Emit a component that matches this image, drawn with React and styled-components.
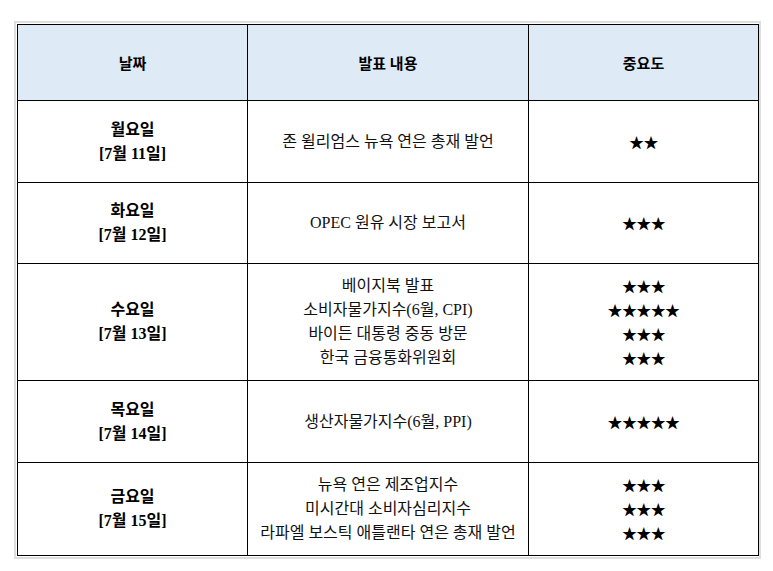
import React from "react";
import styled, { createGlobalStyle } from "styled-components";

const GlobalStyle = createGlobalStyle`
  html, body { margin: 0; padding: 0; background: #ffffff; }
  body { font-family: "Liberation Serif", "Noto Sans CJK KR", serif; }
`;

const Frame = styled.div`
  margin: 21px 0 0 14px;
  width: 747px;
  box-sizing: border-box;
  border: 2px solid #dedede;
  padding: 1px;
`;

const Table = styled.table`
  width: 741px;
  border-collapse: collapse;
  table-layout: fixed;
  border: 1px solid #000;
  font-family: "Liberation Serif", "Noto Sans CJK KR", serif;
  font-size: 16px;
  color: #111;
`;

const HeadCell = styled.th`
  background: #deeaf6;
  border: 1px solid #000;
  font-weight: 700;
  font-size: 15px;
  color: #000;
  text-align: center;
  vertical-align: middle;
  padding: 0;
`;

const Cell = styled.td`
  border: 1px solid #000;
  text-align: center;
  vertical-align: middle;
  padding: 0;
  line-height: 24px;
  font-weight: ${(p) => (p.$bold ? 700 : 400)};
  color: ${(p) => (p.$bold ? "#000" : "#111")};
`;

const Line = styled.div`
  white-space: nowrap;
`;

const Stars = styled.div`
  font-family: "Noto Sans CJK KR", sans-serif;
  font-size: 15px;
  line-height: 24px;
  color: #000;
  letter-spacing: -0.6px;
`;

const rows = [
  { day: "월요일", date: "[7월 11일]", h: 82, items: [["존 윌리엄스 뉴욕 연은 총재 발언", 2]] },
  { day: "화요일", date: "[7월 12일]", h: 81, items: [["OPEC 원유 시장 보고서", 3]] },
  {
    day: "수요일",
    date: "[7월 13일]",
    h: 117,
    items: [
      ["베이지북 발표", 3],
      ["소비자물가지수(6월, CPI)", 5],
      ["바이든 대통령 중동 방문", 3],
      ["한국 금융통화위원회", 3],
    ],
  },
  { day: "목요일", date: "[7월 14일]", h: 82, items: [["생산자물가지수(6월, PPI)", 5]] },
  {
    day: "금요일",
    date: "[7월 15일]",
    h: 93,
    items: [
      ["뉴욕 연은 제조업지수", 3],
      ["미시간대 소비자심리지수", 3],
      ["라파엘 보스틱 애틀랜타 연은 총재 발언", 3],
    ],
  },
];

export default function App() {
  return (
    <>
      <GlobalStyle />
      <Frame>
        <Table>
          <colgroup>
            <col style={{ width: 230 }} />
            <col style={{ width: 281 }} />
            <col style={{ width: 230 }} />
          </colgroup>
          <thead>
            <tr style={{ height: 76 }}>
              <HeadCell>날짜</HeadCell>
              <HeadCell>발표 내용</HeadCell>
              <HeadCell>중요도</HeadCell>
            </tr>
          </thead>
          <tbody>
            {rows.map((r) => (
              <tr key={r.day} style={{ height: r.h }}>
                <Cell $bold>
                  <Line>{r.day}</Line>
                  <Line>{r.date}</Line>
                </Cell>
                <Cell>
                  {r.items.map(([t]) => (
                    <Line key={t}>{t}</Line>
                  ))}
                </Cell>
                <Cell>
                  {r.items.map(([t, n]) => (
                    <Stars key={t}>{"★".repeat(n)}</Stars>
                  ))}
                </Cell>
              </tr>
            ))}
          </tbody>
        </Table>
      </Frame>
    </>
  );
}
